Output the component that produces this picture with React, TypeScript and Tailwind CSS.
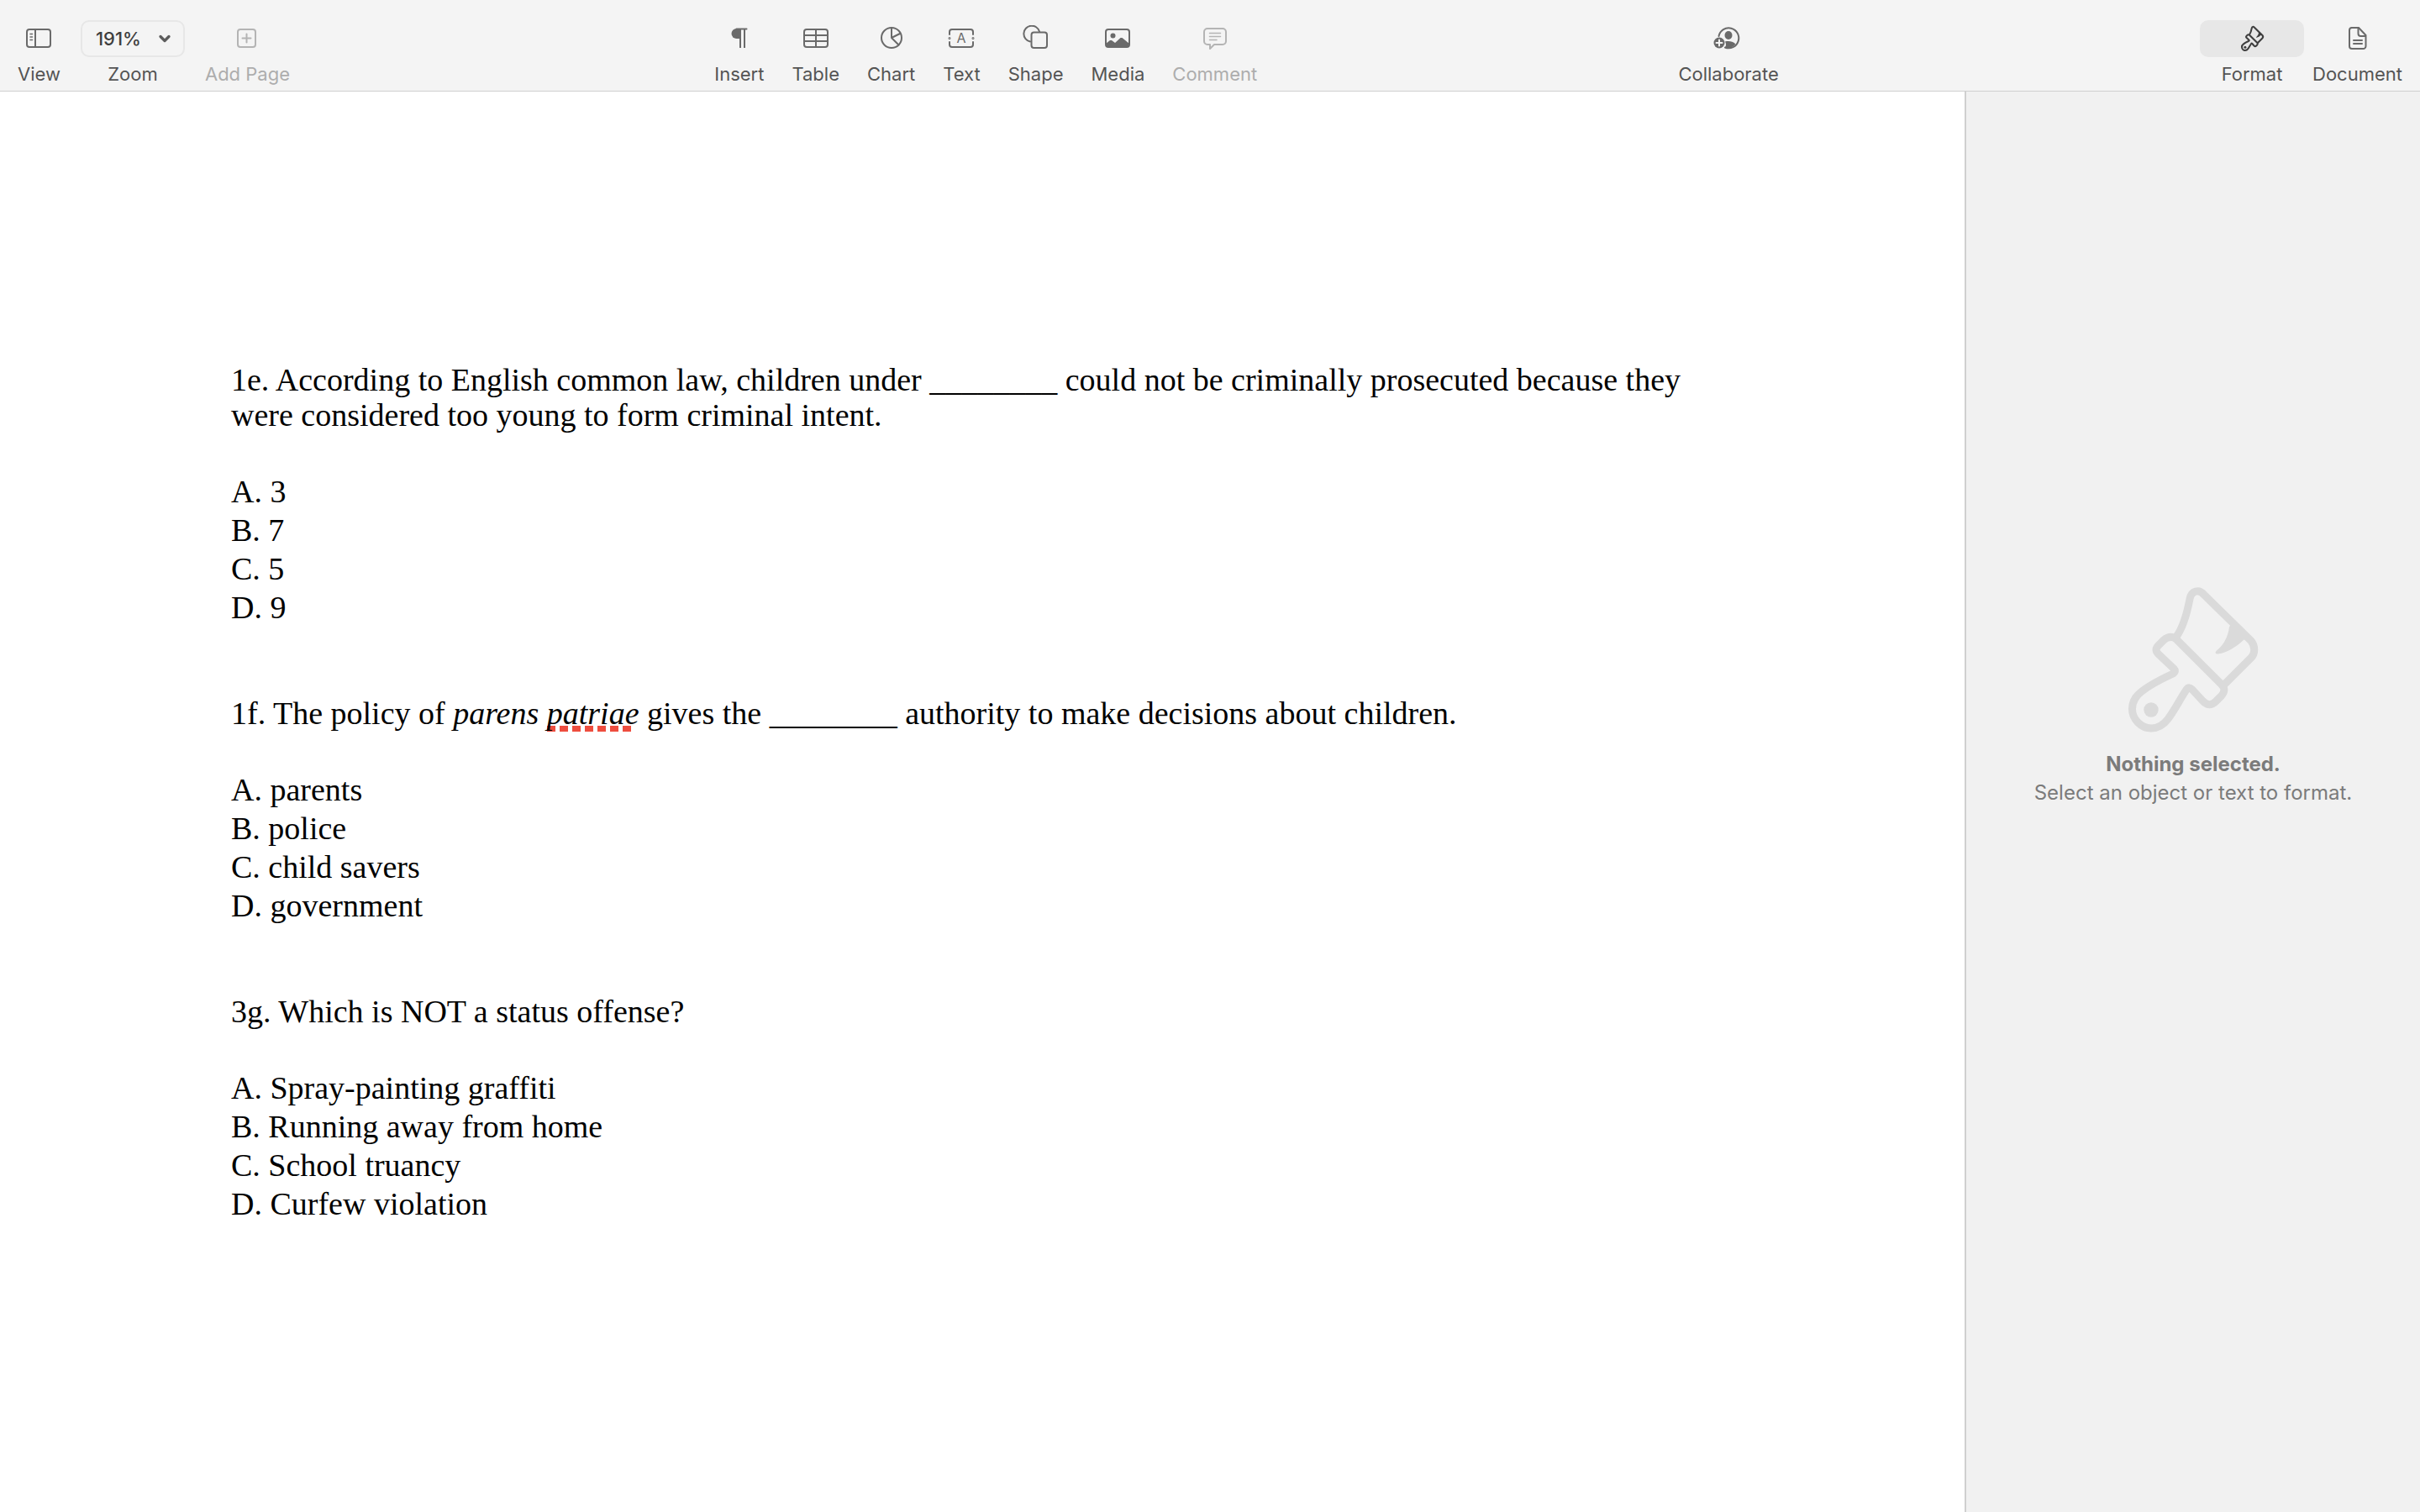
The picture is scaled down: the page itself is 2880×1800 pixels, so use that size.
import type { ReactNode } from "react";
import { ChevronDown } from "lucide-react";

interface ToolProps {
  label: string;
  disabled?: boolean;
  children: ReactNode;
}

const Tool: React.FC<ToolProps> = ({ label, disabled, children }) => (
  <button
    type="button"
    disabled={disabled}
    className={`flex flex-col items-center gap-1 whitespace-nowrap text-[22px] leading-8 ${
      disabled ? "text-[#adadad]" : "text-[#545454]"
    }`}
  >
    <span
      className={`flex h-11 items-center justify-center ${
        disabled ? "text-[#b4b4b4]" : "text-[#6a6a6a]"
      }`}
    >
      {children}
    </span>
    {label}
  </button>
);

interface IconProps {
  width?: number;
  height?: number;
  children: ReactNode;
}

const Icon: React.FC<IconProps> = ({ width = 32, height = 32, children }) => (
  <svg
    width={width}
    height={height}
    viewBox={`0 0 ${width} ${height}`}
    fill="none"
    stroke="currentColor"
    strokeWidth="2"
    strokeLinecap="round"
    strokeLinejoin="round"
    aria-hidden="true"
  >
    {children}
  </svg>
);

interface BrushProps {
  className: string;
  strokeWidth: number;
}

const Brush: React.FC<BrushProps> = ({ className, strokeWidth }) => (
  <svg
    viewBox="0 0 154 174"
    className={className}
    fill="none"
    stroke="currentColor"
    strokeWidth={strokeWidth}
    strokeLinejoin="round"
    overflow="visible"
    aria-hidden="true"
  >
    <path d="M57 59C65 48 70 30 73 14C75 4 84 2 90 9L146 64C151 70 151 79 146 84L113 117" />
    <path d="M42 63C47 59 52 58 57 62L110 115C115 120 115 124 111 129L104 136C99 141 94 141 89 136L76 122C73 119 71 119 69 122C61 134 54 148 47 157C41 165 34 168 27 168C15 168 4.500 157 4.500 145C4.500 137 8 130 16 124C26 116 40 109 53 103C56 101 56 99 54 97L36 80C32 76 32 73 36 69Z" />
    <path
      d="M120 47L125 43L142 59L137 63C127 72 117 78 107 79.500C103.500 80 102.500 77.500 105 75.500C114 68 119 58 120 47Z"
      fill="currentColor"
      stroke="none"
    />
    <circle cx="27" cy="146" r="8.700" fill="currentColor" stroke="none" />
  </svg>
);

const questions = [
  {
    prompt: (
      <>
        1e. According to English common law, children under ________ could not
        be criminally prosecuted because they were considered too young to form
        criminal intent.
      </>
    ),
    options: ["A. 3", "B. 7", "C. 5", "D. 9"],
  },
  {
    prompt: (
      <>
        1f. The policy of{" "}
        <em>
          parens{" "}
          <span className="bg-[repeating-linear-gradient(90deg,#ee4d3f_0_10px,transparent_10px_15px)] bg-[length:102px_7px] bg-[position:left_bottom] bg-no-repeat pb-px">
            patriae
          </span>
        </em>{" "}
        gives the ________ authority to make decisions about children.
      </>
    ),
    options: ["A. parents", "B. police", "C. child savers", "D. government"],
  },
  {
    prompt: <>3g. Which is NOT a status offense?</>,
    options: [
      "A. Spray-painting graffiti",
      "B. Running away from home",
      "C. School truancy",
      "D. Curfew violation",
    ],
  },
];

const Toolbar = () => (
  <header className="flex h-[109px] items-start justify-between border-b border-[#cfcfcf] bg-[#f4f4f4] px-[21px] pt-6">
    <div className="flex gap-6">
      <Tool label="View">
        <Icon>
          <rect x="2" y="5" width="28" height="21" rx="3" />
          <path d="M12 5v21" />
          <path d="M6 10.500h2.500M6 14h2.500M6 17.500h2.500" strokeWidth="1.500" />
        </Icon>
      </Tool>
      <Tool label="Zoom">
        <span className="flex h-11 w-[124px] items-center justify-between rounded-[10px] border-2 border-[#e7e7e7] pl-4 pr-3 font-medium text-[#3e3e3e]">
          191%
          <ChevronDown className="size-5 text-[#5c5c5c]" strokeWidth={4} />
        </span>
      </Tool>
      <Tool label="Add Page" disabled>
        <Icon>
          <rect x="5" y="5" width="21" height="21" rx="3" />
          <path d="M15.500 10.500v10M10.500 15.500h10" />
        </Icon>
      </Tool>
    </div>

    <div className="flex gap-[33px] pl-1">
      <Tool label="Insert">
        <Icon>
          <path d="M17 4h-4.500a6 6 0 0 0 0 12H17z" fill="currentColor" stroke="none" />
          <path d="M12.500 4.500H24.500" />
          <path d="M17 4v23M22 4v23" strokeLinecap="butt" />
        </Icon>
      </Tool>
      <Tool label="Table">
        <Icon>
          <rect x="2" y="5" width="28" height="21" rx="3" />
          <path d="M16 5v21M2 12h28M2 19h28" />
        </Icon>
      </Tool>
      <Tool label="Chart">
        <Icon>
          <circle cx="16" cy="15" r="12" />
          <path d="M16 3v12l10-5M16 15l8.500 8.500" />
        </Icon>
      </Tool>
      <Tool label="Text">
        <Icon>
          <path d="M2 11V8a3 3 0 0 1 3-3h22a3 3 0 0 1 3 3v3M2 20v3a3 3 0 0 0 3 3h22a3 3 0 0 0 3-3v-3" />
          <circle cx="2" cy="15.500" r="0.500" />
          <circle cx="30" cy="15.500" r="0.500" />
          <text
            x="16"
            y="21"
            textAnchor="middle"
            fontSize="16"
            fontFamily="Inter, sans-serif"
            fill="currentColor"
            stroke="none"
          >
            A
          </text>
        </Icon>
      </Tool>
      <Tool label="Shape">
        <Icon>
          <path d="M9 19.500A9.500 9.500 0 1 1 20 7.500" />
          <rect x="10.500" y="8.500" width="18.500" height="18.500" rx="3" />
        </Icon>
      </Tool>
      <Tool label="Media">
        <Icon>
          <rect x="2" y="5" width="28" height="21" rx="3" />
          <circle cx="10.500" cy="12.500" r="3" fill="currentColor" stroke="none" />
          <path d="M2 22l5-4 2 0 4 3 6.500-6h2L30 22v1a3 3 0 0 1-3 3H5a3 3 0 0 1-3-3z" fill="currentColor" stroke="none" />
        </Icon>
      </Tool>
      <Tool label="Comment" disabled>
        <Icon>
          <path d="M7 4h18a4 4 0 0 1 4 4v11a4 4 0 0 1-4 4H15l-5 5v-5H7a4 4 0 0 1-4-4V8a4 4 0 0 1 4-4z" />
          <path d="M9.500 9.500h13M9.500 13.500h13M9.500 17.500h8.500" strokeWidth="1.500" />
        </Icon>
      </Tool>
    </div>

    <Tool label="Collaborate">
      <Icon width={36}>
        <path d="M6.500 13A12 12 0 1 1 14 26.500" />
        <ellipse cx="18" cy="12" rx="4.500" ry="5" fill="currentColor" stroke="none" />
        <path d="M14 19.500c4-1 9-0.500 12.500 3-3 4-8 5.500-13 4.500 2-2 2-5 0.500-7.500z" fill="currentColor" stroke="none" />
        <circle cx="7" cy="21" r="6.500" fill="currentColor" stroke="none" />
        <path d="M7 17.500v7M3.500 21h7" stroke="#f4f4f4" />
      </Icon>
    </Tool>

    <div className="flex gap-[10px]">
      <Tool label="Format">
        <span className="flex h-11 w-[124px] items-center justify-center rounded-[10px] bg-[#e7e7e7] text-[#3e3e3e]">
          <Brush className="h-[30px] w-[27px]" strokeWidth={12} />
        </span>
      </Tool>
      <Tool label="Document">
        <Icon>
          <path d="M9 3h9l8.500 9v13a3 3 0 0 1-3 3H10a3 3 0 0 1-3-3V6a3 3 0 0 1 3-3z" />
          <path d="M17.500 3v7a3 3 0 0 0 3 3H26M12 18h10M12 22h10" />
        </Icon>
      </Tool>
    </div>
  </header>
);

export default function App() {
  return (
    <div className="flex min-h-screen flex-col bg-white font-[Inter,sans-serif]">
      <Toolbar />
      <div className="flex grow">
        <main className="grow px-[275px] pt-[322px] font-['Liberation_Serif',serif] text-[38px] leading-[46px] text-black">
          <div className="flex max-w-[1760px] flex-col gap-[82px]">
            {questions.map((question, i) => (
              <section key={i} className="flex flex-col gap-[47px]">
                <p className="leading-[42px]">{question.prompt}</p>
                <ul>
                  {question.options.map((option) => (
                    <li key={option}>{option}</li>
                  ))}
                </ul>
              </section>
            ))}
          </div>
        </main>
        <aside className="flex w-[542px] shrink-0 flex-col items-center border-l-2 border-[#d0d0d0] bg-[#f1f1f1] pt-[590px] text-2xl leading-[34px] text-[#7b7b7b]">
          <Brush className="mb-5 h-[174px] w-[154px] text-[#dadada]" strokeWidth={9} />
          <p className="font-bold">Nothing selected.</p>
          <p>Select an object or text to format.</p>
        </aside>
      </div>
    </div>
  );
}
